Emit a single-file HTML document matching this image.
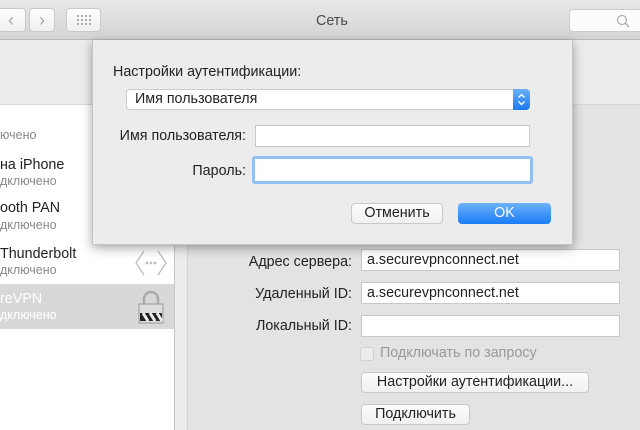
<!DOCTYPE html>
<html><head><meta charset="utf-8"><style>
*{margin:0;padding:0;box-sizing:border-box}
body{width:640px;height:430px;overflow:hidden;position:relative;background:#ececec;font-family:"Liberation Sans",sans-serif;font-size:14.3px;color:#222}
.a{position:absolute}
.tb{left:0;top:0;width:640px;height:40px;background:linear-gradient(#e9e7e9,#d5d3d5);border-bottom:1px solid #b9b9b9}
.btn{background:linear-gradient(#fdfdfd,#f0f0f0);border:1px solid #c9c9c9;border-radius:4px}
.fld{background:#fff;border:1px solid #c8c8c8}
.sm{font-size:12.5px;color:#888}
</style></head><body>
<div class="a tb"></div>
<div class="a btn" style="left:-4px;top:8px;width:30px;height:24px;color:#aaa;font-size:18px;text-align:center;line-height:22px">‹</div>
<div class="a btn" style="left:29px;top:8px;width:26px;height:24px;color:#aaa;font-size:18px;text-align:center;line-height:22px">›</div>
<div class="a btn" style="left:66px;top:8px;width:35px;height:24px"></div>
<svg class="a" style="left:76px;top:14px" width="16" height="12"><g fill="#999"><circle cx="2" cy="2" r="1"/><circle cx="6" cy="2" r="1"/><circle cx="10" cy="2" r="1"/><circle cx="14" cy="2" r="1"/><circle cx="2" cy="6" r="1"/><circle cx="6" cy="6" r="1"/><circle cx="10" cy="6" r="1"/><circle cx="14" cy="6" r="1"/><circle cx="2" cy="10" r="1"/><circle cx="6" cy="10" r="1"/><circle cx="10" cy="10" r="1"/><circle cx="14" cy="10" r="1"/></g></svg>
<div class="a" style="left:316px;top:13px;color:#4a4a4a">Сеть</div>
<div class="a" style="left:569px;top:9px;width:80px;height:23px;background:#fbfbfb;border:1px solid #ccc;border-radius:4px"></div>
<svg class="a" style="left:616px;top:14px" width="14" height="14"><circle cx="6" cy="6" r="4.5" fill="none" stroke="#aaa" stroke-width="1.2"/><path d="M9.5 9.5L13 13" stroke="#aaa" stroke-width="1.3"/></svg>

<div class="a" style="left:0;top:104px;width:175px;height:326px;background:#fff;border-right:1px solid #c8c8c8;border-top:1px solid #d6d6d6"></div>
<div class="a" style="left:175px;top:104px;width:465px;height:1px;background:#d6d6d6"></div>
<div class="a" style="left:187px;top:105px;width:453px;height:325px;background:#e3e3e3;border-left:1px solid #d4d4d4"></div>
<div class="a sm" style="left:0;top:128px">ючено</div>
<div class="a" style="left:0;top:157px">на iPhone</div>
<div class="a sm" style="left:0;top:174px">дключено</div>
<div class="a" style="left:0;top:200px">ooth PAN</div>
<div class="a sm" style="left:0;top:218px">дключено</div>
<div class="a" style="left:0;top:246px">Thunderbolt</div>
<div class="a sm" style="left:0;top:263px">дключено</div>
<svg class="a" style="left:134px;top:249px" width="34" height="28"><path d="M10 2L2 14L10 26M24 2L32 14L24 26" fill="none" stroke="#b8bcc4" stroke-width="1.3"/><g fill="#b8bcc4"><circle cx="13" cy="14" r="1.4"/><circle cx="17" cy="14" r="1.4"/><circle cx="21" cy="14" r="1.4"/></g></svg>
<div class="a" style="left:0;top:284px;width:174px;height:45px;background:#d8d8d8"></div>
<div class="a" style="left:0;top:291px;color:#fff">reVPN</div>
<div class="a" style="left:0;top:308px;color:#fff;font-size:12.5px">дключено</div>
<svg class="a" style="left:137px;top:289px" width="28" height="36"><path d="M7 15V10a7 7 0 0 1 14 0v5" fill="none" stroke="#aaa" stroke-width="2.5"/><rect x="2" y="15" width="24" height="19" fill="#ddd" stroke="#999"/><path d="M3 24h22v8H3z" fill="#222"/><path d="M6 24l5 8M13 24l5 8M20 24l5 8" stroke="#eee" stroke-width="3"/></svg>

<div class="a" style="left:200px;top:254px;width:152px;text-align:right">Адрес сервера:</div>
<div class="a fld" style="left:361px;top:249px;width:259px;height:22px;padding:2px 5px">a.securevpnconnect.net</div>
<div class="a" style="left:200px;top:286px;width:152px;text-align:right">Удаленный ID:</div>
<div class="a fld" style="left:361px;top:282px;width:259px;height:22px;padding:2px 5px">a.securevpnconnect.net</div>
<div class="a" style="left:200px;top:318px;width:152px;text-align:right">Локальный ID:</div>
<div class="a fld" style="left:361px;top:315px;width:259px;height:22px"></div>
<div class="a" style="left:360px;top:347px;width:14px;height:14px;border:1px solid #d0d0d0;border-radius:3px;background:#ececec"></div>
<div class="a" style="left:380px;top:345px;color:#999">Подключать по запросу</div>
<div class="a btn" style="left:361px;top:372px;width:228px;height:21px;text-align:center;line-height:19px">Настройки аутентификации...</div>
<div class="a btn" style="left:361px;top:404px;width:109px;height:21px;text-align:center;line-height:19px">Подключить</div>

<div class="a" style="left:92px;top:40px;width:481px;height:205px;background:#ececec;box-shadow:0 3px 10px rgba(0,0,0,.35);border:1px solid #c4c4c4;border-top:none"></div>
<div class="a" style="left:113px;top:64px">Настройки аутентификации:</div>
<div class="a" style="left:126px;top:89px;width:404px;height:21px;background:#fff;border:1px solid #ccc;border-radius:4px;padding:1px 8px">Имя пользователя</div>
<div class="a" style="left:513px;top:89px;width:17px;height:21px;background:linear-gradient(#6bb0fb,#1a7af4);border-radius:0 4px 4px 0"></div>
<svg class="a" style="left:515px;top:91px" width="13" height="17"><path d="M3.5 6.5L6.5 3.5L9.5 6.5M3.5 10.5L6.5 13.5L9.5 10.5" fill="none" stroke="#fff" stroke-width="1.4"/></svg>
<div class="a" style="left:96px;top:128px;width:150px;text-align:right">Имя пользователя:</div>
<div class="a fld" style="left:255px;top:125px;width:275px;height:22px"></div>
<div class="a" style="left:96px;top:163px;width:150px;text-align:right">Пароль:</div>
<div class="a" style="left:252px;top:156px;width:281px;height:28px;border:3px solid #93c0f3;border-radius:3px;background:#fff"></div>
<div class="a btn" style="left:351px;top:203px;width:92px;height:21px;text-align:center;line-height:19px">Отменить</div>
<div class="a" style="left:458px;top:203px;width:93px;height:21px;background:linear-gradient(#6db2fb,#1a7cf5);border-radius:4px;color:#fff;text-align:center;line-height:21px">OK</div>
</body></html>
